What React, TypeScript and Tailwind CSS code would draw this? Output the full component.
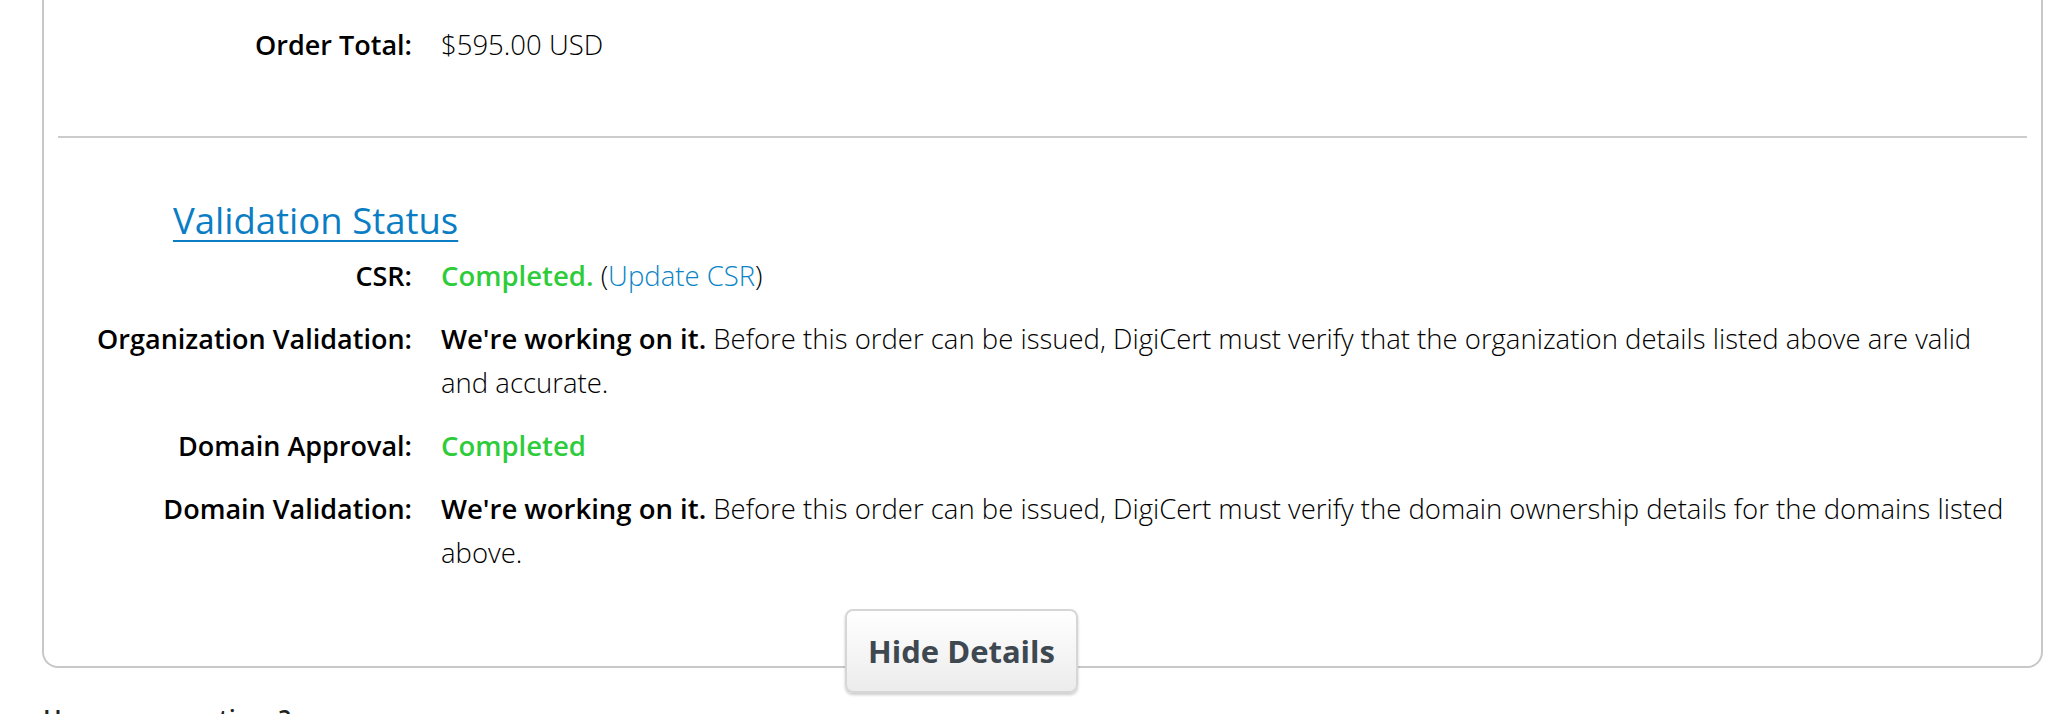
import React from "react";

const rows = [
  { label: "Organization Validation:", kind: "org" },
  { label: "Domain Approval:", kind: "approval" },
  { label: "Domain Validation:", kind: "domain" },
];

function Row({ label, children }: { label: string; children: React.ReactNode }) {
  return (
    <div className="flex leading-[44px]">
      <div className="w-[354px] shrink-0 text-right text-[27px] font-semibold text-black">{label}</div>
      <div className="ml-[29px] flex-1 font-light text-black">{children}</div>
    </div>
  );
}

export default function App() {
  return (
    <div className="w-[2058px] h-[714px] overflow-hidden bg-white text-[27.5px]" style={{ fontFamily: "'Open Sans', sans-serif" }}>
      {/* details card, top edge is above the viewport */}
      <div className="relative ml-[42px] mr-[15px] border-x-2 border-b-2 border-[#c8c8c8] rounded-b-[16px] px-[14px] pt-[23px] pb-[91px]">
        <Row label="Order Total:">$595.00 USD</Row>

        <hr className="mt-[69px] border-t-2 border-[#cccccc]" />

        <h3 className="mt-[60px] ml-[115px] text-[36.5px] leading-[44px] text-[#0a7dc4] underline decoration-2 underline-offset-[6px]">
          Validation Status
        </h3>

        <div className="mt-[12px] flex flex-col gap-[19px]">
          <Row label="CSR:">
            <span className="font-semibold text-[#2ecc3a]">Completed.</span>{" "}
            (<span className="text-[#0a84c6]">Update CSR</span>)
          </Row>
          {rows.map((r) => (
            <Row key={r.kind} label={r.label}>
              {r.kind === "org" && (
                <>
                  <span className="font-semibold">We're working on it.</span> Before this order can be issued, DigiCert must
                  verify that the organization details listed above are valid
                  <br />
                  and accurate.
                </>
              )}
              {r.kind === "approval" && <span className="font-semibold text-[#2ecc3a]">Completed</span>}
              {r.kind === "domain" && (
                <>
                  <span className="font-semibold">We're working on it.</span> Before this order can be issued, DigiCert must
                  verify the domain ownership details for the domains listed
                  <br />
                  above.
                </>
              )}
            </Row>
          ))}
        </div>

        <button
          className="absolute left-[801px] bottom-[-27px] w-[233px] h-[84px] rounded-[8px] border-2 border-[#d6d6d6] bg-gradient-to-b from-[#ffffff] to-[#ececec] shadow-[0_2px_3px_rgba(0,0,0,0.2)] text-[31px] font-bold text-[#3e4850]"
        >
          Hide Details
        </button>
      </div>

      <h3 className="ml-[43px] mt-[32px] text-[25px] font-semibold text-[#222]">Have any questions?</h3>
    </div>
  );
}
